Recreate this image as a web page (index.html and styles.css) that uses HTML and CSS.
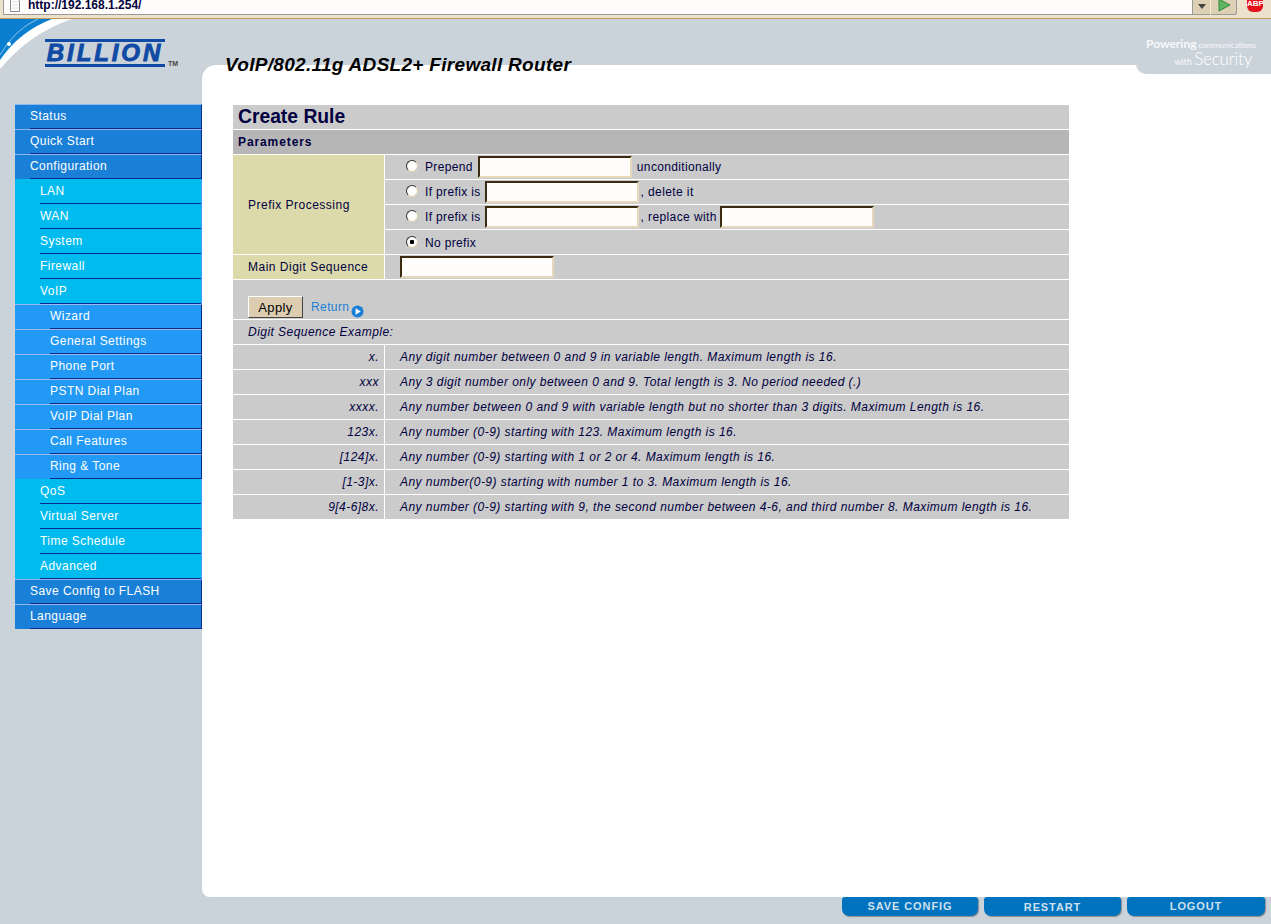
FILE: index.html
```html
<!DOCTYPE html>
<html lang="en">
<head>
<meta charset="utf-8">
<title>Create Rule</title>
<link rel="stylesheet" href="styles.css">
</head>
<body>
<div class="browser-bar">
  <div class="address">
    <svg class="page-icon" width="12" height="14" viewBox="0 0 12 14"><path d="M1.5 -2H7.5L10.5 1V11.5H1.5Z" fill="#fff" stroke="#8a8a8a"/><path d="M3 2H9M3 5H9M3 8H9" stroke="#ddd"/></svg>
    <span class="url">http://192.168.1.254/</span>
  </div>
  <div class="addr-btn drop"><svg width="10" height="6" viewBox="0 0 10 6"><path d="M1 0H9L5 5Z" fill="#444"/></svg></div>
  <div class="addr-btn go"><svg width="14" height="14" viewBox="0 0 14 14"><path d="M2 0L13 6L2 12Z" fill="#62b560" stroke="#2f8a44"/></svg></div>
  <div class="abp"><span>ABP</span></div>
</div>
<header class="top">
  <svg class="swoosh" width="72" height="52" viewBox="0 0 72 52"><path d="M0 0H72Q30 14 0 50Z" fill="#fff"/><path d="M0 0H52Q20 12 0 41Z" fill="#0a7fcf"/><path d="M38 0Q15 10 0 36" fill="none" stroke="#8cc4ea"/><circle cx="9" cy="25" r="2" fill="#fff"/></svg>
  <div class="logo"><span class="logo-word">BILLION</span><span class="tm">TM</span></div>
  <div class="product">VoIP/802.11g ADSL2+ Firewall Router</div>
  <div class="tagline">
    <div class="tag-one"><b>Powering</b> communications</div>
    <div class="tag-two">with <span>Security</span></div>
  </div>
</header>
<div class="layout">
  <nav class="side">
    <a class="nav l1"><span>Status</span></a>
    <a class="nav l1"><span>Quick Start</span></a>
    <a class="nav l1"><span>Configuration</span></a>
    <a class="nav l2"><span>LAN</span></a>
    <a class="nav l2"><span>WAN</span></a>
    <a class="nav l2"><span>System</span></a>
    <a class="nav l2"><span>Firewall</span></a>
    <a class="nav l2"><span>VoIP</span></a>
    <a class="nav l3"><span>Wizard</span></a>
    <a class="nav l3"><span>General Settings</span></a>
    <a class="nav l3"><span>Phone Port</span></a>
    <a class="nav l3"><span>PSTN Dial Plan</span></a>
    <a class="nav l3"><span>VoIP Dial Plan</span></a>
    <a class="nav l3"><span>Call Features</span></a>
    <a class="nav l3"><span>Ring &amp; Tone</span></a>
    <a class="nav l2"><span>QoS</span></a>
    <a class="nav l2"><span>Virtual Server</span></a>
    <a class="nav l2"><span>Time Schedule</span></a>
    <a class="nav l2"><span>Advanced</span></a>
    <a class="nav l1"><span>Save Config to FLASH</span></a>
    <a class="nav l1"><span>Language</span></a>
  </nav>
  <main class="panel">
    <table class="rule">
      <colgroup><col class="col-key"><col></colgroup>
      <tr><td colspan="2" class="title">Create Rule</td></tr>
      <tr><td colspan="2" class="section">Parameters</td></tr>
      <tr>
        <td rowspan="4" class="label">Prefix Processing</td>
        <td class="opt"><input type="radio" name="p" class="radio"><span class="lead wide">Prepend</span><input type="text" class="field"><span class="after">unconditionally</span></td>
      </tr>
      <tr><td class="opt"><input type="radio" name="p" class="radio"><span class="lead">If prefix is</span><input type="text" class="field"><span class="comma">, delete it</span></td></tr>
      <tr><td class="opt"><input type="radio" name="p" class="radio"><span class="lead">If prefix is</span><input type="text" class="field"><span class="comma">, replace with</span><input type="text" class="field"></td></tr>
      <tr><td class="opt"><input type="radio" name="p" class="radio" checked><span class="lead">No prefix</span></td></tr>
      <tr><td class="label">Main Digit Sequence</td><td class="val"><input type="text" class="field"></td></tr>
      <tr><td colspan="2" class="actions"><div class="action-row"><button class="apply">Apply</button><a class="ret">Return</a><svg class="ret-icon" width="13" height="13" viewBox="0 0 14 14"><circle cx="7" cy="7" r="6.5" fill="#1a7fd6"/><path d="M5 3.5L10.5 7L5 10.5Z" fill="#fff"/></svg></div></td></tr>
      <tr><td colspan="2" class="ex-head">Digit Sequence Example:</td></tr>
      <tr><td class="ex-k">x.</td><td class="ex-v">Any digit number between 0 and 9 in variable length. Maximum length is 16.</td></tr>
      <tr><td class="ex-k">xxx</td><td class="ex-v">Any 3 digit number only between 0 and 9. Total length is 3. No period needed (.)</td></tr>
      <tr><td class="ex-k">xxxx.</td><td class="ex-v">Any number between 0 and 9 with variable length but no shorter than 3 digits. Maximum Length is 16.</td></tr>
      <tr><td class="ex-k">123x.</td><td class="ex-v">Any number (0-9) starting with 123. Maximum length is 16.</td></tr>
      <tr><td class="ex-k">[124]x.</td><td class="ex-v">Any number (0-9) starting with 1 or 2 or 4. Maximum length is 16.</td></tr>
      <tr><td class="ex-k">[1-3]x.</td><td class="ex-v">Any number(0-9) starting with number 1 to 3. Maximum length is 16.</td></tr>
      <tr class="last"><td class="ex-k">9[4-6]8x.</td><td class="ex-v">Any number (0-9) starting with 9, the second number between 4-6, and third number 8. Maximum length is 16.</td></tr>
    </table>
  </main>
</div>
<footer class="foot">
  <a class="pill save">SAVE CONFIG</a>
  <a class="pill restart">RESTART</a>
  <a class="pill logout">LOGOUT</a>
</footer>
</body>
</html>
```
FILE: styles.css
```css
* { box-sizing: border-box; }
html, body { margin: 0; height: 924px; overflow: hidden; }
body { background: #cbd3da; font-family: "Liberation Sans", Arial, sans-serif; font-size: 12px; color: #000040; position: relative; }

.browser-bar { height: 19px; background: #ece1ca; border-bottom: 1px solid #c49a5c; display: flex; align-items: flex-start; }
.address { margin-left: 3px; width: 1189px; height: 15px; background: #fffdfb; border: 1px solid #9a9a9a; border-top: 0; border-right: 0; display: flex; }
.page-icon { margin: 0 0 0 5px; flex: none; }
.url { margin-left: 7px; font-weight: bold; font-size: 12px; line-height: 10px; color: #00003c; }
.addr-btn { height: 15px; background: #ded0b4; border: 1px solid #9a9a9a; border-top: 0; display: flex; align-items: center; justify-content: center; }
.drop { width: 19px; border-right: 1px solid #f2ead8; }
.go { width: 26px; border-left: 0; border-bottom-right-radius: 3px; }
.go svg { margin-top: -3px; }
.abp { margin-left: 10px; width: 16px; height: 12px; background: #e4101c; border-radius: 0 0 6px 6px; color: #fff; font-weight: bold; font-size: 8px; line-height: 8px; text-align: center; }

.top { height: 46px; display: flex; position: relative; }
.swoosh { position: absolute; left: 0; top: 0; }
.logo { margin: 20px 0 0 45px; width: 135px; height: 28px; flex: none; position: relative; }
.logo-word { display: block; width: 120px; height: 28px; border-top: 3px solid #0f4aa5; border-bottom: 3px solid #0f4aa5; color: #0f4aa5; font-weight: bold; font-style: italic; font-size: 24px; line-height: 21px; letter-spacing: 2.9px; text-align: center; -webkit-text-stroke: .9px #0f4aa5; }
.tm { position: absolute; left: 123px; top: 22px; font-size: 7px; line-height: 6px; font-weight: bold; color: #444; }
.product { margin: 34px 0 0 45px; position: relative; z-index: 2; font-weight: bold; font-style: italic; font-size: 19px; line-height: 24px; letter-spacing: .3px; color: #000; white-space: nowrap; }
.tagline { position: absolute; right: 0; top: 0; width: 135px; height: 55px; background: #cbd3da; border-bottom-left-radius: 10px; z-index: 1; color: #f7f8fa; padding: 19px 15px 0 0; text-align: right; font-family: "Lato", sans-serif; }
.tag-one { font-size: 8px; line-height: 12px; }
.tag-one b { font-size: 12px; }
.tag-two { font-size: 9px; line-height: 16px; font-weight: 400; padding-right: 4px; }
.tag-two span { font-size: 17px; font-weight: 300; letter-spacing: -.2px; color: #fff; }

.layout { height: 832px; display: flex; }
.side { width: 202px; flex: none; padding: 39px 0 0 15px; }
.panel { flex: 1; background: #fff; border-radius: 14px 0 0 8px; padding: 40px 0 0 31px; }

.nav { display: block; height: 25px; color: #fff; letter-spacing: .45px; }
.nav span { display: block; height: 25px; line-height: 25px; border-bottom: 1px solid #0b2a90; }
.l1 { background: #1a7fd6; padding-left: 15px; border-top: 1px solid #8fb4ee; border-right: 1px solid #0b2a90; }
.l1 span { height: 24px; line-height: 22px; }
.l2 { background: #00bbee; padding-left: 25px; border-right: 1px solid #3f9cf2; }
.l3 { background: #2299f5; padding-left: 35px; border-top: 1px solid #9db8f0; border-right: 1px solid #0b2a90; }
.l3 span { height: 24px; line-height: 22px; }

.rule { width: 836px; border-collapse: separate; border-spacing: 0; table-layout: fixed; }
.col-key { width: 152px; }
.rule td { padding: 0; border-bottom: 1px solid #fff; background: #cbcbcb; height: 25px; letter-spacing: .5px; white-space: nowrap; }
.rule tr.last td { border-bottom: 0; height: 24px; }
.rule td.title { font-size: 19.3px; font-weight: bold; padding: 0 0 1px 5px; letter-spacing: 0; }
.rule td.section { background: #b6b6b6; font-weight: bold; padding-left: 5px; font-size: 12px; letter-spacing: .9px; }
.rule td.label { background: #dcdaaa; border-right: 1px solid #fff; padding-left: 15px; }
.rule td.opt { padding: 1px 0 0 21px; }
.rule td.val { padding-left: 15px; }
.radio { appearance: none; width: 12px; height: 12px; margin: 0 7px 0 0; border-radius: 50%; background: #fffdfb; border: 1px solid; border-color: #333 #e2d2b4 #e2d2b4 #333; vertical-align: -1px; }
.radio:checked { background: radial-gradient(circle, #000 0 2px, #fffdfb 2.5px); }
.field { width: 154px; height: 22px; padding: 0; background: #fffdfb; border: 2px solid; border-color: #3a2a10 #e6d8bc #e6d8bc #3a2a10; vertical-align: middle; }
.opt .field { margin: -1px 0 1px; }
.lead { margin-right: 4px; letter-spacing: .35px; }
.lead.wide { margin-right: 5px; }
.after { margin-left: 5px; letter-spacing: .35px; }
.comma { margin-left: 2px; margin-right: 3px; letter-spacing: .4px; }
.rule td.actions { height: 40px; padding: 16px 0 0 15px; vertical-align: top; }
.action-row { display: flex; height: 23px; }
.apply { width: 55px; height: 22px; padding: 0; background: #dccdb0; border: 1px solid; border-color: #fff #444 #444 #fff; font-family: inherit; font-size: 13px; letter-spacing: .4px; color: #000; }
.ret { color: #1a7fd6; margin-left: 8px; line-height: 22px; letter-spacing: .4px; }
.ret-icon { margin: 9px 0 0 2px; }
.ex-head, .ex-k, .ex-v { font-style: italic; }
.rule td.ex-head { padding-left: 15px; letter-spacing: .46px; }
.rule td.ex-k { background: #cbcbcb; border-right: 1px solid #fff; text-align: right; padding-right: 5px; letter-spacing: .46px; }
.rule td.ex-v { padding-left: 15px; letter-spacing: .46px; }

.foot { height: 27px; display: flex; justify-content: flex-end; align-items: flex-start; gap: 6px; padding-right: 6px; }
.pill { height: 19px; background: #0073bf; border-radius: 3px 3px 7px 7px; box-shadow: 1px 1px 1px #8d8d8d; color: #cfe0ee; font-weight: bold; font-size: 11px; letter-spacing: .9px; text-align: center; line-height: 18px; }
.save { width: 136px; }
.restart { width: 137px; line-height: 20px; }
.logout { width: 138px; }
```
